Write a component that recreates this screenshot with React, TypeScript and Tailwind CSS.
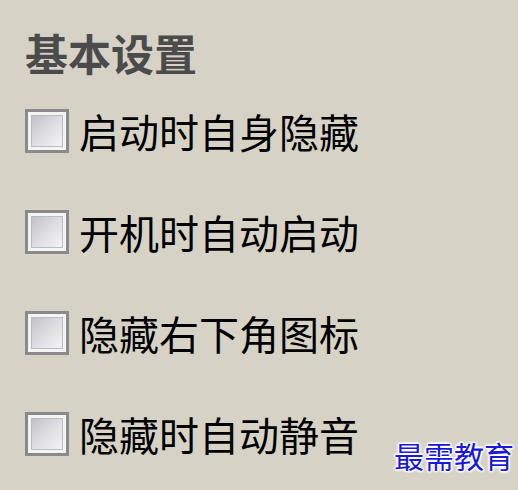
import React from "react";

const items = ["启动时自身隐藏", "开机时自动启动", "隐藏右下角图标", "隐藏时自动静音"];

function Box() {
  return (
    <div className="w-[44px] h-[44px] shrink-0 border-[3px] border-[#8a8a8a] bg-[#f4f4f4] p-[3px]">
      <div className="w-full h-full border border-[#bcbcc0] bg-gradient-to-br from-[#c0c0c6] via-[#dedee2] to-[#f4f4f6]" />
    </div>
  );
}

export default function App() {
  return (
    <div
      className="relative w-[518px] h-[490px] bg-[#d6d3c6] pl-[25px] pt-[31px] overflow-hidden"
      style={{ fontFamily: '"Noto Sans CJK SC", "Noto Sans", sans-serif' }}
    >
      <div className="text-[43px] leading-none font-bold text-[#4b4b4b]">基本设置</div>
      <div className="mt-[6px] flex flex-col">
        {items.map((t) => (
          <div key={t} className="h-[101px] flex items-center gap-[10px]">
            <Box />
            <span className="text-[40px] leading-none text-black">{t}</span>
          </div>
        ))}
      </div>
      <div
        className="absolute left-[394px] top-[440px] text-[30px] leading-none text-[#1818e0]"
        style={{
          textShadow:
            "0 0 3px #fff, 0 0 3px #fff, 1px 1px 2px #fff, -1px -1px 2px #fff, 1px -1px 2px #fff, -1px 1px 2px #fff",
        }}
      >
        最需教育
      </div>
    </div>
  );
}
